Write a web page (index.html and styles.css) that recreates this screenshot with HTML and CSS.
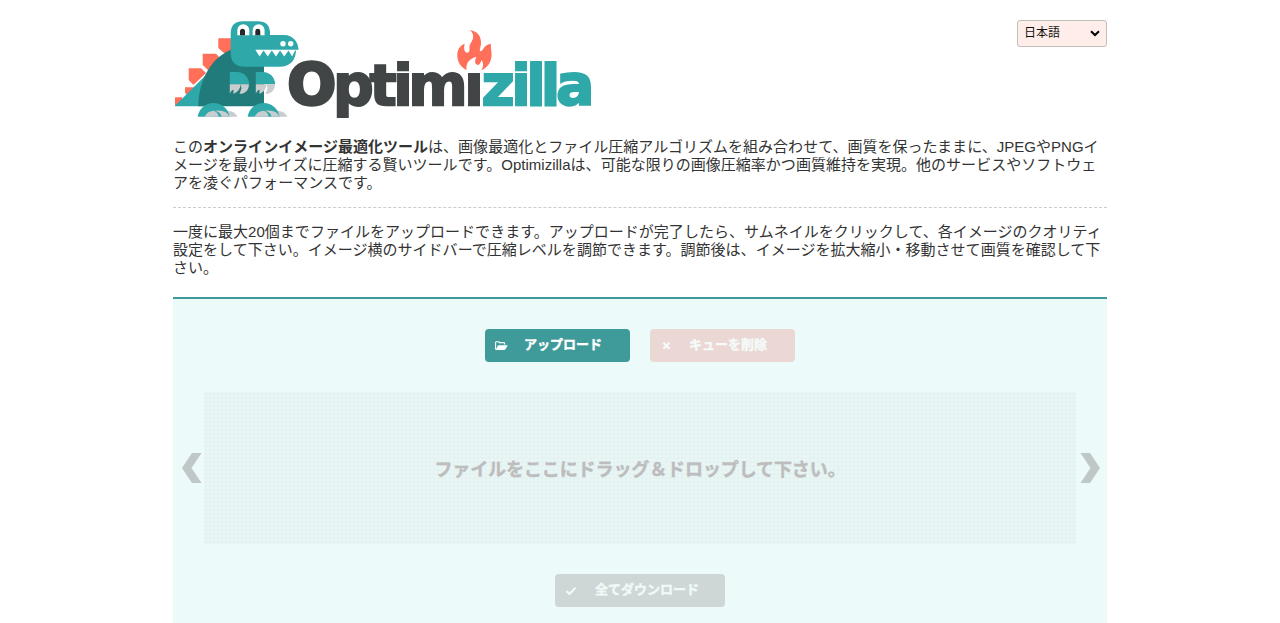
FILE: index.html
```html
<!DOCTYPE html>
<html lang="ja">
<head>
<meta charset="UTF-8">
<title>Optimizilla</title>
<link rel="stylesheet" href="styles.css">
</head>
<body>
	<div class="wrapper">
		<header class="header">
			<a class="logo" href="#">
				<svg width="430" height="110" viewBox="173 20 430 110">
					<!-- spikes -->
					<g fill="#ff6f59">
						<path d="M218.3 38.3H232V53H224L218.3 48z"/>
						<path d="M202.7 53.7H216L221 59L209 71L202.7 65z"/>
						<path d="M188.7 68.3H201L206 73L194 84.5H193L188.7 80z"/>
						<path d="M185 87.3H194V92L189 96L185 93z"/>
						<path d="M175 97.3H182V101L176 106H175z"/>
					</g>
					<!-- body and tail -->
					<path d="M174.5 106.2L208 73V106.2z" fill="#2fa8a9"/>
					<path d="M198.3 106.2C198.3 80 212 56 233 49H264V106.2z" fill="#217b7b"/>
					<!-- head -->
					<path d="M243 21.2H258Q270 21.2 270 33.5V35H284C293 35 298.5 42 298.5 50H296C296 60 290 66.8 280 66.8H245Q230.7 66.8 230.7 53V33.5Q230.7 21.2 243 21.2z" fill="#2fa8a9"/>
					<path d="M237.3 35.2V30.2A6 6 0 0 1 249.3 30.2V35.2zM252.6 35.2V30.2A6 6 0 0 1 264.6 30.2V35.2z" fill="#fff"/>
					<path d="M240 35.2V31.3A2.5 2.5 0 0 1 245 31.3V35.2zM255.3 35.2V31.3A2.5 2.5 0 0 1 260.3 31.3V35.2z" fill="#25282a"/>
					<circle cx="283" cy="43.7" r="2.7" fill="#fff"/>
					<circle cx="290.7" cy="43.7" r="2.7" fill="#fff"/>
					<path d="M255.3 49.8H298.4V50.6H295L292.2 56.4L288.5 50.6L284.2 56.4L280 50.6L276 56.4L271.8 50.6L267.8 56.4L263.6 50.6L259.6 56.4z" fill="#fff"/>
					<!-- arms -->
					<g id="arm">
						<path d="M229.8 72H237A12 12 0 0 1 249 84.3H229.8z" fill="#2fa8a9"/>
						<path d="M229.8 84.3H240.6Q240.4 91 233.5 94V89.5Q231.5 90 229.8 93.5zM240.6 84.3H249Q249 93.5 239.5 94L241.5 88.5z" fill="#c9cdd0"/>
					</g>
					<use href="#arm" x="26"/>
					<!-- feet -->
					<g id="foot">
						<path d="M222 116.8V111.2Q234 109 237.5 116.8z" fill="#c9cdd0"/>
						<path d="M197.7 116.8A16 15.6 0 0 1 229.5 116.8z" fill="#2fa8a9"/>
						<path d="M204.5 116.8Q207.5 110.8 214 110.8Q218.5 113 218.5 116.8z" fill="#c9cdd0"/>
						<path d="M215 110.8Q226.5 109.5 229.5 116.8H221.5Q221 112.5 215 110.8z" fill="#c9cdd0"/>
					</g>
					<use href="#foot" x="50"/>
					<!-- name -->
					<text class="logo-text logo-dark" x="287.6 333 369.5 393.3 408.3 464.3" y="105"><tspan class="logo-cap">O</tspan>ptimı</text>
					<text class="logo-text logo-teal" x="481.5 511.2 526.2 540.7 556" y="105">zilla</text>
					<!-- flame -->
					<path transform="translate(280 20) scale(.3333)" d="M570 30C594 34 604 50 603 70C603 82 596 91 602 94C611 93 608 76 633 71C631 84 637 96 634 113C631 132 619 144 604 151C610 142 612 132 605 121C602 126 601 134 594 135C583 132 584 122 589 110C571 115 556 128 560 150C543 143 532 126 532 106C532 88 540 77 554 71C551 84 552 97 562 98C575 96 563 84 572 70C582 55 583 42 570 30z" fill="#ff6f59"/>
				</svg>
			</a>
			<div class="lang">
				<span>日本語</span>
				<svg width="10" height="7" viewBox="0 0 10 7"><path d="M1 1.2L5 5L9 1.2" fill="none" stroke="#000" stroke-width="2"/></svg>
			</div>
		</header>
		<div class="intro">
			<p>この<strong>オンラインイメージ最適化ツール</strong>は、画像最適化とファイル圧縮アルゴリズムを組み合わせて、画質を保ったままに、JPEGやPNGイメージを最小サイズに圧縮する賢いツールです。Optimizillaは、可能な限りの画像圧縮率かつ画質維持を実現。他のサービスやソフトウェアを凌ぐパフォーマンスです。</p>
			<p class="howto">一度に最大20個までファイルをアップロードできます。アップロードが完了したら、サムネイルをクリックして、各イメージのクオリティ設定をして下さい。イメージ横のサイドバーで圧縮レベルを調節できます。調節後は、イメージを拡大縮小・移動させて画質を確認して下さい。</p>
		</div>
		<main class="uploader">
			<div class="buttons">
				<button class="btn btn-upload">
					<svg width="13" height="10" viewBox="0 0 13 10"><path d="M.6 7.8V1.5Q.6.7 1.4.7H3.6Q4.4.7 4.4 1.6H8.8Q9.6 1.6 9.6 2.4V3.6M.6 7.8Q.7 8.6 1.5 8.6" fill="none" stroke="#fff" stroke-width="1.1"/><path d="M3.7 4.2H12.2Q12.8 4.2 12.5 4.9L10.4 8.3Q9.9 9 9.2 9H1.2Q.5 9 1 8.2L2.7 5Q3.1 4.2 3.7 4.2z" fill="#fff"/></svg>
					<span>アップロード</span>
				</button>
				<button class="btn btn-clear">
					<svg width="13" height="10" viewBox="0 0 13 10"><path d="M3.4 1.7L9.4 7.7M9.4 1.7L3.4 7.7" fill="none" stroke="#f4fbfa" stroke-width="2.3"/></svg>
					<span>キューを削除</span>
				</button>
			</div>
			<div class="queue">
				<svg class="arrow" width="20" height="30" viewBox="0 0 20 30"><path d="M10 0H19.5L9.5 15L19.5 30H10L0 15z"/></svg>
				<div class="dropzone">ファイルをここにドラッグ＆ドロップして下さい。</div>
				<svg class="arrow" width="20" height="30" viewBox="0 0 20 30"><path d="M10 0H.5L10.5 15L.5 30H10L20 15z"/></svg>
			</div>
			<div class="buttons">
				<button class="btn btn-download">
					<svg width="13" height="10" viewBox="0 0 13 10"><path d="M1.3 5L4.5 8L10.5 1.8" fill="none" stroke="#effaf9" stroke-width="2.3"/></svg>
					<span>全てダウンロード</span>
				</button>
			</div>
		</main>
	</div>
</body>
</html>
```
FILE: styles.css
```css
body {
	margin: 0;
	height: 623px;
	overflow: hidden;
	background-color: #fff;
	color: #333;
	font: 15px/18px "Liberation Sans", "Noto Sans CJK JP", sans-serif;
}

.wrapper {
	width: 934px;
	margin: 0 auto;
}

.header {
	display: flex;
	justify-content: space-between;
	align-items: flex-start;
	padding-top: 20px;
	height: 117px;
}

.logo svg {
	display: block;
	overflow: visible;
}

.logo-text {
	font: bold 57px "DejaVu Sans", sans-serif;
	stroke-width: 2px;
}

.logo-cap {
	stroke-width: 3.4px;
}

.logo-dark {
	fill: #414546;
	stroke: #414546;
}

.logo-teal {
	fill: #2fa8a9;
	stroke: #2fa8a9;
}

.lang {
	display: flex;
	justify-content: space-between;
	align-items: center;
	box-sizing: border-box;
	width: 90px;
	height: 27px;
	padding: 0 6px 1px;
	border: 1px solid #c5bcbc;
	border-radius: 3px;
	background-color: #ffede9;
	color: #111;
	font-size: 12px;
}

.intro p {
	margin: 0;
	height: 54px;
	padding: 1px 0 15px;
	letter-spacing: .02px;
}

.intro .howto {
	padding: 15px 0 20px;
	border-top: 1px dashed #ccc;
}

.uploader {
	height: 326px;
	box-sizing: border-box;
	border-top: 2px solid #3f9999;
	background-color: #edfafa;
	padding-top: 30px;
}

.buttons {
	display: flex;
	justify-content: center;
	gap: 20px;
}

.btn {
	display: flex;
	align-items: center;
	width: 145px;
	height: 33px;
	padding: 0 10px;
	border: 0;
	border-radius: 4px;
	color: #fff;
	font: bold 13px/18px "Liberation Sans", "Noto Sans CJK JP", sans-serif;
	-webkit-text-stroke: .4px;
	cursor: pointer;
}

.btn span {
	margin-left: 16px;
	padding-bottom: 1px;
}

.btn-upload {
	background-color: #3f9a9a;
}

.btn-clear {
	background-color: #ebd7d4;
	color: #f4fbfa;
}

.btn-download {
	width: 170px;
	background-color: #cfd7d6;
	color: #effaf9;
}

.btn-download span {
	margin-left: 17px;
}

.queue {
	display: flex;
	align-items: center;
	margin: 30px 7px 30px 9px;
}

.arrow {
	flex: none;
	fill: #bfc7c7;
}

.dropzone {
	flex: 1;
	height: 152px;
	margin: 0 4px 0 2px;
	box-sizing: border-box;
	padding-top: 1px;
	background-color: #e8f5f5;
	background-image: radial-gradient(#e1efee 0.6px, transparent 1px);
	background-size: 4px 4px;
	color: #bdbdbd;
	font-size: 18px;
	font-weight: bold;
	line-height: 154px;
	letter-spacing: -.1px;
	text-align: center;
	-webkit-text-stroke: .4px;
}
```
